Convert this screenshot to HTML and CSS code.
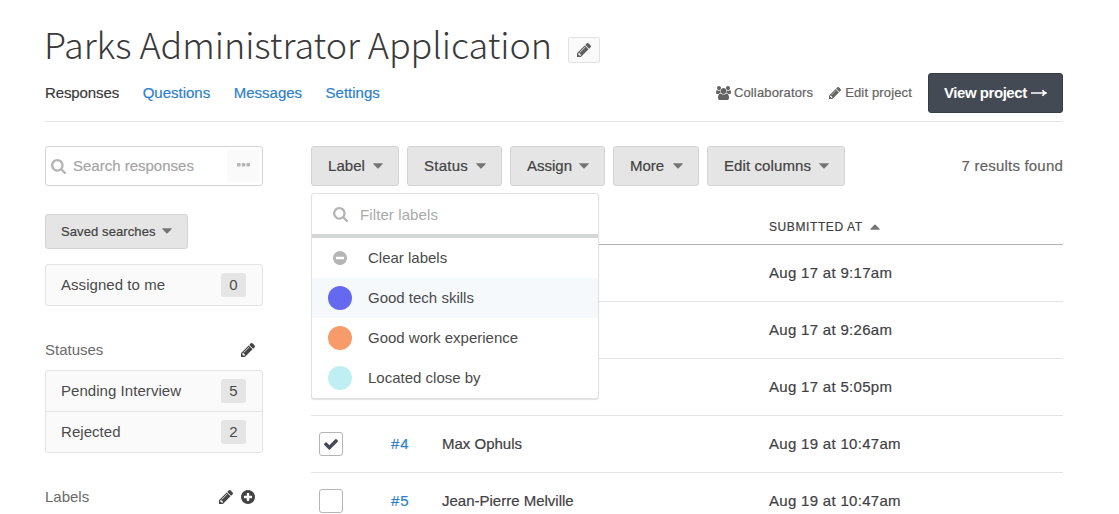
FILE: index.html
```html
<!DOCTYPE html>
<html lang="en">
<head>
<meta charset="utf-8">
<title>Parks Administrator Application</title>
<link rel="stylesheet" href="styles.css">
</head>
<body>
<svg class="sprite" aria-hidden="true">
  <symbol id="pencil" viewBox="128 149 1515 1515"><path d="M491 1536l91-91-235-235-91 91v107h128v128h107zm523-928q0-22-22-22-10 0-17 7l-542 542q-7 7-7 17 0 22 22 22 10 0 17-7l542-542q7-7 7-17zm-54-192l416 416-832 832h-416v-416zm683 96q0 53-37 90l-166 166-416-416 166-165q36-38 90-38 53 0 91 38l235 234q37 39 37 91z"/></symbol>
  <symbol id="search" viewBox="64 128 1664 1664"><path d="M1216 832q0-185-131.500-316.500t-316.500-131.500-316.500 131.500-131.500 316.500 131.500 316.500 316.500 131.500 316.500-131.500 131.500-316.500zm512 832q0 52-38 90t-90 38q-54 0-90-38l-343-342q-179 124-399 124-143 0-273.500-55.500t-225-150-150-225-55.500-273.500 55.500-273.500 150-225 225-150 273.500-55.500 273.500 55.500 225 150 150 225 55.500 273.500q0 220-124 399l343 343q37 37 37 90z"/></symbol>
  <symbol id="users" viewBox="0 0 1920 1792"><path d="M593 896q-162 5-265 128h-134q-82 0-138-40.500t-56-118.500q0-353 124-353 6 0 43.500 21t97.500 42.500 119 21.500q67 0 133-23-5 37-5 66 0 139 81 256zm1071 637q0 120-73 189.500t-194 69.500h-874q-121 0-194-69.500t-73-189.500q0-53 3.500-103.500t14-109 26.500-108.500 43-97.500 62-81 85.500-53.500 111.500-20q10 0 43 21.500t73 48 107 48 135 21.500 135-21.500 107-48 73-48 43-21.500q61 0 111.500 20t85.500 53.500 62 81 43 97.500 26.500 108.500 14 109 3.500 103.500zm-1024-1277q0 106-75 181t-181 75-181-75-75-181 75-181 181-75 181 75 75 181zm704 384q0 159-112.500 271.500t-271.500 112.500-271.500-112.500-112.500-271.500 112.500-271.500 271.500-112.500 271.500 112.500 112.500 271.500zm576 225q0 78-56 118.500t-138 40.500h-134q-103-123-265-128 81-117 81-256 0-29-5-66 66 23 133 23 59 0 119-21.500t97.500-42.500 43.500-21q124 0 124 353zm-128-609q0 106-75 181t-181 75-181-75-75-181 75-181 181-75 181 75 75 181z"/></symbol>
  <symbol id="check" viewBox="121 370 1550 1152"><path d="M1671 566q0 40-28 68l-724 724-136 136q-28 28-68 28t-68-28l-136-136-362-362q-28-28-28-68t28-68l136-136q28-28 68-28t68 28l294 295 656-657q28-28 68-28t68 28l136 136q28 28 28 68z"/></symbol>
  <symbol id="plus" viewBox="128 128 1536 1536"><path d="M1344 960v-128q0-26-19-45t-45-19h-256v-256q0-26-19-45t-45-19h-128q-26 0-45 19t-19 45v256h-256q-26 0-45 19t-19 45v128q0 26 19 45t45 19h256v256q0 26 19 45t45 19h128q26 0 45-19t19-45v-256h256q26 0 45-19t19-45zm320-64q0 209-103 385.500t-279.500 279.500-385.500 103-385.500-103-279.500-279.500-103-385.500 103-385.500 279.500-279.500 385.500-103 385.500 103 279.500 279.500 103 385.500z"/></symbol>
  <symbol id="minus" viewBox="128 128 1536 1536"><path d="M1344 960v-128q0-26-19-45t-45-19h-768q-26 0-45 19t-19 45v128q0 26 19 45t45 19h768q26 0 45-19t19-45zm320-64q0 209-103 385.500t-279.500 279.500-385.500 103-385.500-103-279.500-279.500-103-385.500 103-385.500 279.500-279.500 385.500-103 385.500 103 279.500 279.500 103 385.500z"/></symbol>
  <symbol id="dots" viewBox="0 0 13 4"><rect width="3.600" height="3.600" rx="1"/><rect x="4.700" width="3.600" height="3.600" rx="1"/><rect x="9.400" width="3.600" height="3.600" rx="1"/></symbol>
  <symbol id="caret" viewBox="0 0 10 6"><path d="M.7.300h8.600q.9 0 .4.800L5.600 5.300q-.6.600-1.200 0L.3 1.100Q-.2.300.7.300z"/></symbol>
  <symbol id="arrow" viewBox="0 0 16 8"><path d="M0 4h14M11.500 1.200Q12.500 3.200 15 4Q12.500 4.800 11.500 6.800" fill="none" stroke="currentColor" stroke-width="1.600"/></symbol>
</svg>
<div class="page">
  <header class="header">
    <div class="title-row">
      <h1 class="title">Parks Administrator Application</h1>
      <button class="edit-title" aria-label="Edit title"><svg class="icon icon-14"><use href="#pencil"/></svg></button>
    </div>
    <div class="nav-row">
      <nav class="tabs">
        <a class="tab tab-active">Responses</a>
        <a class="tab">Questions</a>
        <a class="tab">Messages</a>
        <a class="tab">Settings</a>
      </nav>
      <div class="tools">
        <a class="tool tool-people"><svg class="icon icon-users"><use href="#users"/></svg><span>Collaborators</span></a>
        <a class="tool tool-edit"><svg class="icon icon-12"><use href="#pencil"/></svg><span>Edit project</span></a>
        <a class="view-button"><span>View project</span><svg class="icon icon-arrow"><use href="#arrow"/></svg></a>
      </div>
    </div>
  </header>
  <div class="columns">
    <aside class="sidebar">
      <div class="search-box">
        <svg class="icon icon-15"><use href="#search"/></svg>
        <span class="search-hint">Search responses</span>
        <span class="search-more"><svg class="icon icon-dots"><use href="#dots"/></svg></span>
      </div>
      <button class="button button-saved"><span>Saved searches</span><svg class="icon icon-caret"><use href="#caret"/></svg></button>
      <ul class="filters">
        <li class="filter"><span class="filter-name">Assigned to me</span><span class="count">0</span></li>
      </ul>
      <div class="group-head group-statuses"><span class="group-name">Statuses</span><svg class="icon icon-14"><use href="#pencil"/></svg></div>
      <ul class="filters">
        <li class="filter"><span class="filter-name">Pending Interview</span><span class="count">5</span></li>
        <li class="filter"><span class="filter-name">Rejected</span><span class="count">2</span></li>
      </ul>
      <div class="group-head group-labels"><span class="group-name">Labels</span><svg class="icon icon-14"><use href="#pencil"/></svg><svg class="icon icon-14"><use href="#plus"/></svg></div>
    </aside>
    <main class="main">
      <div class="toolbar">
        <div class="dropdown">
          <button class="button button-label"><span>Label</span><svg class="icon icon-caret"><use href="#caret"/></svg></button>
          <div class="menu">
            <div class="menu-search"><svg class="icon icon-15"><use href="#search"/></svg><span>Filter labels</span></div>
            <div class="menu-item"><span class="swatch"><svg class="icon icon-14"><use href="#minus"/></svg></span><span class="menu-text">Clear labels</span></div>
            <div class="menu-item menu-item-active"><span class="swatch swatch-indigo"></span><span class="menu-text">Good tech skills</span></div>
            <div class="menu-item"><span class="swatch swatch-orange"></span><span class="menu-text">Good work experience</span></div>
            <div class="menu-item"><span class="swatch swatch-aqua"></span><span class="menu-text">Located close by</span></div>
          </div>
        </div>
        <button class="button button-status"><span>Status</span><svg class="icon icon-caret"><use href="#caret"/></svg></button>
        <button class="button button-assign"><span>Assign</span><svg class="icon icon-caret"><use href="#caret"/></svg></button>
        <button class="button button-more"><span>More</span><svg class="icon icon-caret"><use href="#caret"/></svg></button>
        <button class="button button-columns"><span>Edit columns</span><svg class="icon icon-caret"><use href="#caret"/></svg></button>
        <span class="results">7 results found</span>
      </div>
      <div class="table">
        <div class="row row-head"><span class="cell-date">Submitted at</span><svg class="icon icon-caret icon-up"><use href="#caret"/></svg></div>
        <div class="row"><span class="cell-date">Aug 17 at 9:17am</span></div>
        <div class="row"><span class="cell-date">Aug 17 at 9:26am</span></div>
        <div class="row"><span class="cell-date">Aug 17 at 5:05pm</span></div>
        <div class="row"><span class="checkbox"><svg class="icon icon-check"><use href="#check"/></svg></span><a class="cell-id">#4</a><span class="cell-name">Max Ophuls</span><span class="cell-date">Aug 19 at 10:47am</span></div>
        <div class="row"><span class="checkbox"></span><a class="cell-id">#5</a><span class="cell-name">Jean-Pierre Melville</span><span class="cell-date">Aug 19 at 10:47am</span></div>
      </div>
    </main>
  </div>
</div>
</body>
</html>
```

FILE: styles.css
```css
* { box-sizing: border-box; }

body {
  margin: 0;
  height: 514px;
  overflow: hidden;
  background: #fff;
  color: #3f4144;
  font: 15px/20px "Liberation Sans", Arial, sans-serif;
}

.sprite { display: none; }
.page { width: 1018px; margin-left: 45px; }

.icon { display: block; flex: none; fill: currentColor; }
.icon-12 { width: 12px; height: 12px; }
.icon-14 { width: 14px; height: 14px; }
.icon-15 { width: 15px; height: 15px; }
.icon-users { width: 15px; height: 14px; }
.icon-dots { width: 13px; height: 4px; }
.icon-caret { width: 10px; height: 6px; color: #757575; }
.icon-up { transform: rotate(180deg); margin-left: 7px; }
.icon-arrow { width: 16px; height: 8px; }
.icon-check { width: 14px; height: 11px; }

/* Header */
.header { height: 122px; padding-top: 17px; border-bottom: 1px solid #e4e4e4; }
.title-row { display: flex; height: 56px; }
.title {
  margin: 0 0 0 -1px;
  width: 524px;
  font: 300 36px/53px "Noto Sans CJK JP", "Noto Sans", sans-serif;
  letter-spacing: -.06px;
  color: #3a3a3a;
  white-space: nowrap;
}
.edit-title {
  display: flex;
  align-items: center;
  justify-content: center;
  width: 32px;
  height: 26px;
  margin-top: 20px;
  padding: 0;
  border: 1px solid #e2e2e2;
  border-radius: 2px;
  background: #fafafa;
  color: #5f5f5f;
}
.nav-row { display: flex; height: 40px; align-items: center; justify-content: space-between; }
.tabs { display: flex; gap: 23.500px; -webkit-text-stroke: .2px; }
.tab { color: #2e80cc; white-space: nowrap; }
.tab-active { color: #3b3b3b; letter-spacing: -.1px; }
.tools { display: flex; align-items: center; }
.tool { display: flex; align-items: center; gap: 4px; font-size: 13px; color: #636363; white-space: nowrap; -webkit-text-stroke: .2px; }
.tool-people { margin-right: 16px; gap: 3px; letter-spacing: .15px; }
.tool-edit { margin-right: 16px; letter-spacing: .15px; }
.view-button {
  display: flex;
  align-items: center;
  gap: 4px;
  width: 135px;
  height: 40px;
  padding-left: 15px;
  border: 1px solid #363b44;
  border-radius: 3px;
  background: #444a54;
  color: #fff;
  font-weight: bold;
  letter-spacing: -.45px;
  white-space: nowrap;
}

.columns { display: flex; gap: 48px; padding-top: 24px; }

/* Sidebar */
.sidebar { width: 218px; }
.search-box {
  display: flex;
  align-items: center;
  height: 40px;
  padding: 0 3px 0 5px;
  border: 1px solid #d4d4d4;
  border-radius: 3px;
  color: #b5b5b5;
}
.search-hint { flex: 1; padding-left: 7px; color: #a5a5a5; white-space: nowrap; -webkit-text-stroke: .2px; }
.search-more { display: flex; width: 32px; height: 32px; align-items: center; justify-content: center; padding-bottom: 2px; background: #fafafa; border-radius: 2px; }

.button {
  display: flex;
  align-items: center;
  justify-content: space-between;
  height: 40px;
  padding: 0 15px 0 16px;
  border: 1px solid #d3d3d3;
  border-radius: 3px;
  background: #e5e5e5;
  color: #424242;
  font: inherit;
  white-space: nowrap;
  -webkit-text-stroke: .2px;
}
.button .icon-caret { margin-bottom: 1px; }
.button-saved { width: 143px; height: 35px; margin: 28px 0 15px; padding-left: 15px; font-size: 13px; letter-spacing: .1px; }

.filters { margin: 0; padding: 0; list-style: none; border: 1px solid #e4e4e4; border-radius: 3px; background: #fafafa; }
.filter { display: flex; align-items: center; justify-content: space-between; height: 40px; padding: 0 16px 0 15px; color: #4a4a4a; letter-spacing: .05px; }
.filter + .filter { height: 41px; border-top: 1px solid #e4e4e4; }
.count { width: 25px; height: 24px; line-height: 24px; text-align: center; border-radius: 3px; background: #e5e5e5; }
.group-head { display: flex; align-items: center; gap: 8px; height: 20px; padding-right: 8px; color: #444; }
.group-name { flex: 1; color: #6a6a6a; }
.group-statuses { margin: 34px 0 10px; }
.group-labels { margin-top: 34px; }

/* Responses */
.main { width: 752px; }
.toolbar { display: flex; gap: 8px; align-items: center; }
.dropdown { position: relative; }
.button-label { width: 88px; letter-spacing: .05px; }
.button-status { width: 95px; letter-spacing: .25px; }
.button-assign { width: 95px; }
.button-more { width: 86px; }
.button-columns { width: 138px; letter-spacing: .1px; }
.results { margin-left: auto; color: #626262; white-space: nowrap; letter-spacing: .2px; -webkit-text-stroke: .2px; }

.menu {
  position: absolute;
  top: 47px;
  left: 0;
  z-index: 1;
  width: 288px;
  border: 1px solid #e2e2e2;
  border-radius: 3px;
  background: #fff;
  box-shadow: 0 1px 1px rgba(0, 0, 0, .12);
}
.menu-search { display: flex; align-items: center; gap: 12px; height: 44px; padding-left: 21px; border-bottom: 4px solid #d5d7d7; color: #b5b5b5; }
.menu-search span { padding-top: 2px; color: #aaa; letter-spacing: .1px; }
.menu-item { display: flex; align-items: center; gap: 16px; height: 40px; padding-left: 16px; color: #4a4a4a; }
.menu-item-active { background: #f5f9fc; }
.swatch { display: flex; align-items: center; justify-content: center; width: 24px; height: 24px; border-radius: 50%; color: #b5b5b5; }
.swatch-indigo { background: #6569ef; }
.swatch-orange { background: #f89b6a; }
.swatch-aqua { background: #bfeff2; }
.menu-text { white-space: nowrap; }

.table { padding-top: 22px; }
.row { display: grid; grid-template-columns: 80px 51px 327px 1fr; align-items: center; height: 57px; border-bottom: 1px solid #e4e4e4; -webkit-text-stroke: .2px; }
.row-head { display: flex; height: 37px; padding: 2px 0 0 458px; border-color: #b3b3b3; font-size: 12px; text-transform: uppercase; }
.checkbox { display: flex; align-items: center; justify-content: center; grid-column: 1; width: 24px; height: 24px; margin-left: 8px; border: 1px solid #b5b5b5; border-radius: 3px; color: #444a54; }
.cell-id { grid-column: 2; color: #2e80cc; letter-spacing: .9px; }
.cell-name { grid-column: 3; }
.cell-date { grid-column: 4; letter-spacing: .3px; }
.row-head .cell-date { letter-spacing: .6px; }
```
